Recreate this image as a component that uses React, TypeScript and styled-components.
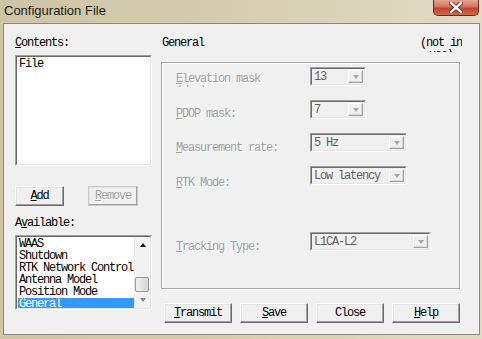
import styled, { createGlobalStyle } from 'styled-components'

const GlobalStyle = createGlobalStyle`
  html, body {
    margin: 0;
    padding: 0;
    background: #d8cfb4;
  }
  body {
    font-family: "Liberation Mono", "DejaVu Sans Mono", monospace;
  }
`

const mono = `
  font-family: "Liberation Mono", "DejaVu Sans Mono", monospace;
  font-size: 12px;
  letter-spacing: -1.2px;
  line-height: 12px;
`

const Window = styled.div`
  width: 482px;
  height: 339px;
  display: flex;
  flex-direction: column;
  background: linear-gradient(90deg, #cfc5a5 0%, #d6cdb1 50%, #e2dbc4 100%);
  box-sizing: border-box;
  padding: 0 2px 4px 3px;
`

const TitleBar = styled.div`
  height: 23px;
  display: flex;
  justify-content: space-between;
  align-items: flex-start;
`

const Title = styled.div`
  font-family: "Liberation Sans", Arial, sans-serif;
  font-size: 13px;
  color: #1b1b1b;
  padding: 2px 0 0 1px;
  line-height: 18px;
`

const CloseButton = styled.div`
  width: 46px;
  height: 16px;
  margin-right: 1px;
  box-sizing: border-box;
  border: 1px solid #6b2a1c;
  border-top: none;
  border-radius: 0 0 5px 5px;
  background: linear-gradient(180deg, #e6a290 0%, #d5735c 45%, #c1452c 55%, #cf6a4a 100%);
  display: flex;
  align-items: center;
  justify-content: center;
`

const Client = styled.div`
  flex: 1;
  display: flex;
  background: #f0f0f0;
  border: 1px solid #8d8877;
  padding: 13px 0 0 11px;
`

const LeftColumn = styled.div`
  width: 137px;
  display: flex;
  flex-direction: column;
`

const RightColumn = styled.div`
  width: 300px;
  margin-left: 9px;
  display: flex;
  flex-direction: column;
`

const Label = styled.div<{ $mt?: number }>`
  ${mono}
  color: #000;
  height: 12px;
  margin-top: ${(p) => p.$mt ?? 0}px;
  white-space: nowrap;
`

const Sunken = styled.div`
  box-sizing: border-box;
  border-style: solid;
  border-width: 1px;
  border-color: #a0a0a0 #ffffff #ffffff #a0a0a0;
`

const ListBox = styled(Sunken)<{ $h: number; $mt: number }>`
  height: ${(p) => p.$h}px;
  margin-top: ${(p) => p.$mt}px;
  background: #fff;
  display: flex;
`

const ListInner = styled.div`
  flex: 1;
  display: flex;
  border-style: solid;
  border-width: 1px;
  border-color: #696969 #e3e3e3 #e3e3e3 #696969;
  overflow: hidden;
`

const Items = styled.div`
  flex: 1;
  min-width: 0;
  display: flex;
  flex-direction: column;
  padding: 1px 0 0 1px;
`

const Item = styled.div<{ $selected?: boolean }>`
  ${mono}
  height: 12px;
  flex-shrink: 0;
  white-space: nowrap;
  padding-left: 1px;
  box-sizing: border-box;
  color: ${(p) => (p.$selected ? '#fff' : '#000')};
  background: ${(p) => (p.$selected ? '#3399ff' : 'transparent')};
  outline: ${(p) => (p.$selected ? '1px dotted #c7822f' : 'none')};
  outline-offset: -1px;
`

const ScrollBar = styled.div`
  width: 15px;
  flex-shrink: 0;
  display: flex;
  flex-direction: column;
  background: #f2f2f2;
  border-left: 1px solid #e8e8e8;
`

const ScrollArrow = styled.div`
  height: 16px;
  display: flex;
  align-items: center;
  justify-content: center;
`

const Arrow = styled.div<{ $dir: 'up' | 'down'; $color: string }>`
  width: 0;
  height: 0;
  border-left: 3.5px solid transparent;
  border-right: 3.5px solid transparent;
  ${(p) =>
    p.$dir === 'up'
      ? `border-bottom: 4px solid ${p.$color};`
      : `border-top: 4px solid ${p.$color};`}
`

const Track = styled.div`
  flex: 1;
  display: flex;
  flex-direction: column;
  justify-content: flex-end;
`

const Thumb = styled.div`
  height: 15px;
  margin: 0 1px 0 0;
  box-sizing: border-box;
  border: 1px solid #979797;
  border-radius: 2px;
  background: linear-gradient(90deg, #f0f0f0 0%, #e4e4e4 50%, #d4d4d4 100%);
`

const ButtonRow = styled.div<{ $mt: number; $gap: number; $pl?: number }>`
  display: flex;
  gap: ${(p) => p.$gap}px;
  margin-top: ${(p) => p.$mt}px;
  padding-left: ${(p) => p.$pl ?? 0}px;
`

const Button = styled.div<{ $w: number; $disabled?: boolean }>`
  ${mono}
  width: ${(p) => p.$w}px;
  height: 20px;
  box-sizing: border-box;
  display: flex;
  align-items: center;
  justify-content: center;
  background: #f0f0f0;
  border-style: solid;
  border-width: 1px;
  border-color: #ffffff #696969 #696969 #ffffff;
  box-shadow: inset -1px -1px 0 #a0a0a0, inset 1px 1px 0 #e3e3e3;
  outline: 1px solid #c9c9c9;
  outline-offset: -1px;
  color: ${(p) => (p.$disabled ? '#a0a0a0' : '#000')};
  text-shadow: ${(p) => (p.$disabled ? '1px 1px 0 #fff' : 'none')};
`

const RealButton = styled(Button)`
  outline: none;
`

const Header = styled.div`
  display: flex;
  justify-content: space-between;
  height: 15px;
  padding-left: 1px;
`

const NotInUse = styled.div`
  ${mono}
  width: 42px;
  height: 15px;
  overflow: hidden;
  text-align: center;
  margin-right: -1px;
`

const GroupBox = styled.div`
  width: 299px;
  height: 227px;
  margin-top: 10px;
  box-sizing: border-box;
  border: 1px solid #a9a9a9;
  box-shadow: inset 1px 1px 0 #fff, 1px 1px 0 #fff;
  padding: 4px 0 0 14px;
  display: grid;
  grid-template-columns: 134px auto;
  grid-auto-rows: 33px;
  align-items: start;
`

const FieldLabel = styled.div<{ $offset: number; $clip?: boolean }>`
  ${mono}
  color: #a0a0a0;
  text-shadow: 1px 1px 0 #fff;
  margin-top: ${(p) => p.$offset}px;
  width: ${(p) => (p.$clip ? 100 : 130)}px;
  height: ${(p) => (p.$clip ? 14 : 12)}px;
  overflow: hidden;
`

const Combo = styled(Sunken)<{ $w: number }>`
  width: ${(p) => p.$w}px;
  height: 19px;
`

const ComboInner = styled.div`
  height: 100%;
  box-sizing: border-box;
  display: flex;
  align-items: center;
  border-style: solid;
  border-width: 1px;
  border-color: #696969 #e3e3e3 #e3e3e3 #696969;
  background: #f0f0f0;
  padding: 0 1px 0 2px;
`

const ComboText = styled.div`
  ${mono}
  flex: 1;
  color: #5f5f5f;
  white-space: nowrap;
  overflow: hidden;
`

const ComboButton = styled.div`
  width: 15px;
  height: 13px;
  box-sizing: border-box;
  border-style: solid;
  border-width: 1px;
  border-color: #ffffff #a0a0a0 #a0a0a0 #ffffff;
  box-shadow: inset -1px -1px 0 #d8d8d8;
  display: flex;
  align-items: center;
  justify-content: center;
`

const Spacer = styled.div``

const U = styled.span`
  text-decoration: underline;
  text-underline-offset: 1px;
`

const CloseIcon = () => (
  <svg width="14" height="11" viewBox="0 0 14 11">
    <path d="M2 1 L12 10 M12 1 L2 10" stroke="#5a1e14" strokeWidth="4" strokeLinecap="square" />
    <path d="M2 1 L12 10 M12 1 L2 10" stroke="#ffffff" strokeWidth="2.4" strokeLinecap="square" />
  </svg>
)

interface ComboBoxProps {
  width: number
  value: string
}

const ComboBox = ({ width, value }: ComboBoxProps) => (
  <Combo $w={width}>
    <ComboInner>
      <ComboText>{value}</ComboText>
      <ComboButton>
        <Arrow $dir="down" $color="#a6a6a6" />
      </ComboButton>
    </ComboInner>
  </Combo>
)

const available = ['WAAS', 'Shutdown', 'RTK Network Control', 'Antenna Model', 'Position Mode', 'General']

const App = () => {
  return (
    <Window>
      <GlobalStyle />
      <TitleBar>
        <Title>Configuration File</Title>
        <CloseButton>
          <CloseIcon />
        </CloseButton>
      </TitleBar>
      <Client>
        <LeftColumn>
          <Label>
            <U>C</U>ontents:
          </Label>
          <ListBox $h={111} $mt={6}>
            <ListInner>
              <Items>
                <Item>File</Item>
              </Items>
            </ListInner>
          </ListBox>
          <ButtonRow $mt={20} $gap={24}>
            <RealButton $w={49}>
              <span>
                <U>A</U>dd
              </span>
            </RealButton>
            <Button $w={50} $disabled>
              <span>
                <U>R</U>emove
              </span>
            </Button>
          </ButtonRow>
          <Label $mt={11}>
            A<U>v</U>ailable:
          </Label>
          <ListBox $h={75} $mt={6}>
            <ListInner>
              <Items>
                {available.map((name) => (
                  <Item key={name} $selected={name === 'General'}>
                    {name}
                  </Item>
                ))}
              </Items>
              <ScrollBar>
                <ScrollArrow>
                  <Arrow $dir="up" $color="#111" />
                </ScrollArrow>
                <Track>
                  <Thumb />
                </Track>
                <ScrollArrow>
                  <Arrow $dir="down" $color="#888" />
                </ScrollArrow>
              </ScrollBar>
            </ListInner>
          </ListBox>
        </LeftColumn>
        <RightColumn>
          <Header>
            <Label>General</Label>
            <NotInUse>(not in use)</NotInUse>
          </Header>
          <GroupBox>
            <FieldLabel $offset={6} $clip>
              <U>E</U>levation mask (deg)
            </FieldLabel>
            <ComboBox width={56} value="13" />
            <FieldLabel $offset={8}>
              <U>P</U>DOP mask:
            </FieldLabel>
            <ComboBox width={56} value="7" />
            <FieldLabel $offset={9}>
              <U>M</U>easurement rate:
            </FieldLabel>
            <ComboBox width={97} value="5 Hz" />
            <FieldLabel $offset={11}>
              <U>R</U>TK Mode:
            </FieldLabel>
            <ComboBox width={97} value="Low latency" />
            <Spacer />
            <Spacer />
            <FieldLabel $offset={9}>
              <U>T</U>racking Type:
            </FieldLabel>
            <ComboBox width={121} value="L1CA-L2" />
          </GroupBox>
          <ButtonRow $mt={14} $gap={8} $pl={3}>
            <RealButton $w={68}>
              <span>
                <U>T</U>ransmit
              </span>
            </RealButton>
            <RealButton $w={68}>
              <span>
                <U>S</U>ave
              </span>
            </RealButton>
            <RealButton $w={68}>Close</RealButton>
            <RealButton $w={68}>
              <span>
                <U>H</U>elp
              </span>
            </RealButton>
          </ButtonRow>
        </RightColumn>
      </Client>
    </Window>
  )
}

export default App
